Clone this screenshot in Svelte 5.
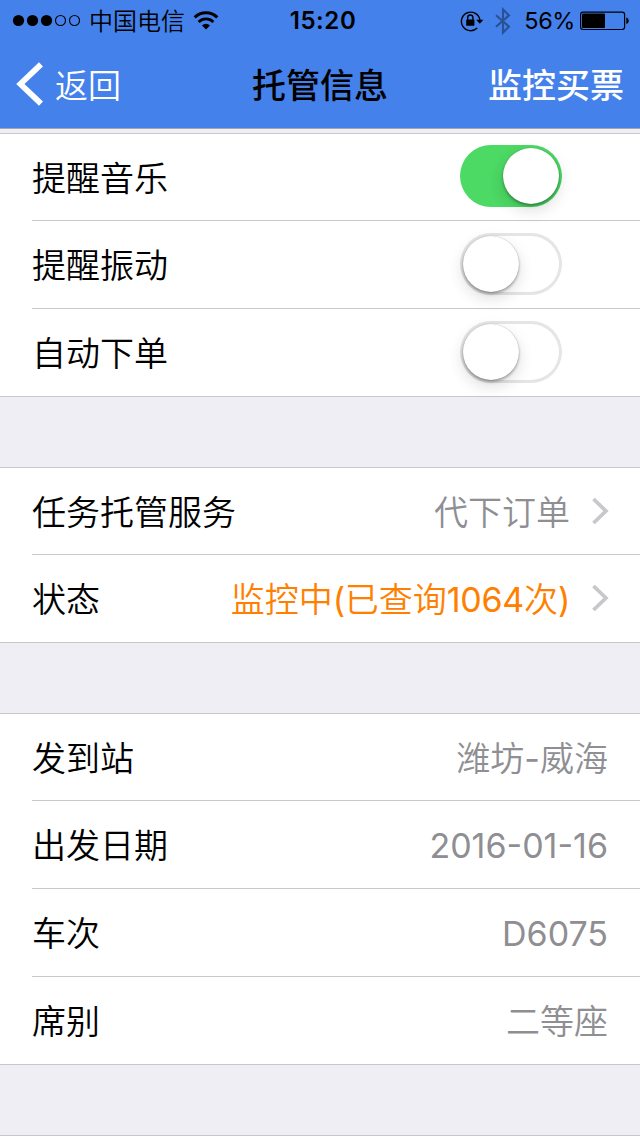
<script>
  let reminders = $state([
    { label: '提醒音乐', on: true },
    { label: '提醒振动', on: false },
    { label: '自动下单', on: false }
  ]);

  const service = [
    { label: '任务托管服务', value: '代下订单' },
    { label: '状态', value: '监控中(已查询1064次)', active: true }
  ];

  const trip = [
    { label: '发到站', value: '潍坊-威海' },
    { label: '出发日期', value: '2016-01-16' },
    { label: '车次', value: 'D6075' },
    { label: '席别', value: '二等座' }
  ];

  const signal = 3;

  // latin runs are set a little heavier than the hanzi around them
  const runs = (s) => s.match(/[\x20-\x7e]+|[^\x20-\x7e]+/g).map((t) => ({ t, latin: t.charCodeAt(0) < 127 }));
</script>

<div class="screen">
  <header>
    <div class="status">
      <div class="side">
        <svg class="dots" width="70" height="14" viewBox="0 0 70 14">
          {#each [0, 1, 2, 3, 4] as i}
            <circle cx={6.5 + i * 14} cy="6.5" r={i < signal ? 5.6 : 5}
                    fill={i < signal ? '#000' : 'none'} stroke={i < signal ? 'none' : '#000'} stroke-width="1.1"/>
          {/each}
        </svg>
        <span class="carrier">中国电信</span>
        <svg class="wifi" width="26" height="20" viewBox="0 0 26 20">
          <path d="M1.7 6.4a16 16 0 0 1 22.6 0" fill="none" stroke="#000" stroke-width="3"/>
          <path d="M5.6 10.9a10.5 10.5 0 0 1 14.8 0" fill="none" stroke="#000" stroke-width="2.8"/>
          <path d="M13 18.6l-4-4.2a5.8 5.8 0 0 1 8 0z"/>
        </svg>
      </div>
      <span class="time">15:20</span>
      <div class="side right">
        <svg class="lock" width="24" height="22" viewBox="0 0 24 22">
          <path d="M17.2 18.1A9.3 9.3 0 1 1 19.9 10" fill="none" stroke="#000" stroke-width="1.4"/>
          <path d="M16.2 9.8h7.2l-3.6 4z"/>
          <rect x="6.2" y="9.4" width="8.2" height="6.4" rx="0.6"/>
          <path d="M7.7 10V7.6a2.6 2.6 0 0 1 5.2 0V10" fill="none" stroke="#000" stroke-width="1.4"/>
        </svg>
        <svg class="bt" width="16" height="28" viewBox="0 0 16 28">
          <path d="M1 8.2L14 19.6 8 25.6V2.4l6 6L1 19.8" fill="none" stroke="#2a5196" stroke-width="2.1"/>
        </svg>
        <span class="percent">56%</span>
        <svg class="battery" width="49" height="20" viewBox="0 0 49 20">
          <rect x="0.6" y="1.1" width="44" height="17.4" rx="2.4" fill="none" stroke="#000" stroke-width="1.2"/>
          <rect x="2" y="2.5" width="23" height="14.6" rx="1"/>
          <path d="M46.3 6.5c1.6.4 2.4 1.7 2.4 3.3s-.8 2.9-2.4 3.3z"/>
        </svg>
      </div>
    </div>
    <nav>
      <button class="back">
        <svg width="28" height="44" viewBox="0 0 28 44">
          <path d="M25 2.4L4.4 22 25 41.6" fill="none" stroke="#fff" stroke-width="5.8"/>
        </svg>
        <span>返回</span>
      </button>
      <h1>托管信息</h1>
      <button class="action">监控买票</button>
    </nav>
  </header>

  <section>
    {#each reminders as item}
      <div class="row">
        <span class="label">{item.label}</span>
        <button class="switch" class:on={item.on} role="switch" aria-checked={item.on}
                aria-label={item.label} onclick={() => (item.on = !item.on)}>
          <span class="knob"></span>
        </button>
      </div>
    {/each}
  </section>

  <section>
    {#each service as item}
      <div class="row">
        <span class="label">{item.label}</span>
        <span class="value" class:active={item.active}>{#each runs(item.value) as run}<span class:latin={run.latin}>{run.t}</span>{/each}</span>
        <svg class="chevron" width="18" height="28" viewBox="0 0 18 28">
          <path d="M1.5 2l12.4 12L1.5 26" fill="none" stroke="#c7c7cc" stroke-width="3.8"/>
        </svg>
      </div>
    {/each}
  </section>

  <section>
    {#each trip as item}
      <div class="row">
        <span class="label">{item.label}</span>
        <span class="value">{#each runs(item.value) as run}<span class:latin={run.latin}>{run.t}</span>{/each}</span>
      </div>
    {/each}
  </section>

  <div class="next"></div>
</div>

<style>
  :global(body) { background: #efeef4; }
  .screen {
    width: 640px;
    height: 1136px;
    overflow: hidden;
    background: #efeef4;
    font-family: Inter, 'Noto Sans CJK SC', sans-serif;
    color: #000;
  }
  button { padding: 0; border: 0; background: none; font: inherit; color: inherit; cursor: pointer; }
  svg { display: block; flex-shrink: 0; }

  header { height: 128px; background: #4481eb; border-bottom: 1px solid #a7a7ab; margin-bottom: 4px; }
  .status { display: grid; grid-template-columns: 1fr auto 1fr; align-items: center; height: 41px; font-size: 24px; line-height: 37px; }
  .side { display: flex; align-items: center; padding-left: 12px; }
  .side.right { justify-content: flex-end; padding: 0 11px 0 0; }
  .carrier { margin-left: 7px; width: 96px; padding-top: 1px; font-weight: 350; white-space: nowrap; }
  .wifi { margin-left: 8px; }
  .time { padding-left: 6px; font-weight: 600; letter-spacing: 0.6px; }
  .bt { margin-left: 11px; }
  .percent { margin-left: 13px; font-size: 23.5px; letter-spacing: -0.4px; }
  .battery { margin-left: 5px; }

  nav { display: grid; grid-template-columns: 1fr auto 1fr; align-items: center; height: 86px; padding: 0 16px; font-size: 34px; line-height: 84px; }
  .back { display: flex; align-items: center; gap: 11px; color: #fff; font-size: 33px; font-weight: 350; }
  .back svg { margin-top: -1px; }
  .back span, h1, .action { padding-top: 3px; }
  h1 { margin: 0; font-size: 34px; font-weight: 500; }
  .action { justify-self: end; color: #fff; font-weight: 500; }

  section { border-top: 1px solid #c8c7cc; border-bottom: 1px solid #c8c7cc; background: #fff; margin-bottom: 70px; }
  .row { display: flex; align-items: center; height: 87px; margin-left: 32px; padding-right: 32px; font-size: 34px; line-height: 82px; }
  .row:first-child { height: 86px; }
  .row + .row { border-top: 1px solid #c8c7cc; }
  .label { flex: 1; padding-top: 3px; font-weight: 350; }
  .value { padding-top: 3px; color: #8e8e93; font-weight: 350; }
  .latin { font-weight: 400; }
  .value.active { color: #ff8000; }
  .value.active .latin { letter-spacing: -0.3px; }
  .chevron { margin: -1px -2px 0 22px; }

  .switch { width: 102px; height: 62px; margin: -2px 46px 0 0; padding: 3px; border-radius: 31px; background: #fff; box-shadow: inset 0 0 0 3px #e5e5e5; display: flex; }
  .switch.on { background: #4cd964; box-shadow: none; justify-content: flex-end; }
  .knob { width: 56px; height: 56px; border-radius: 50%; background: #fff; box-shadow: 0 6px 16px rgba(0, 0, 0, 0.14), 0 2px 3px rgba(0, 0, 0, 0.3), 0 0 1px rgba(0, 0, 0, 0.3); }

  .next { height: 1px; background: #c8c7cc; }
</style>
